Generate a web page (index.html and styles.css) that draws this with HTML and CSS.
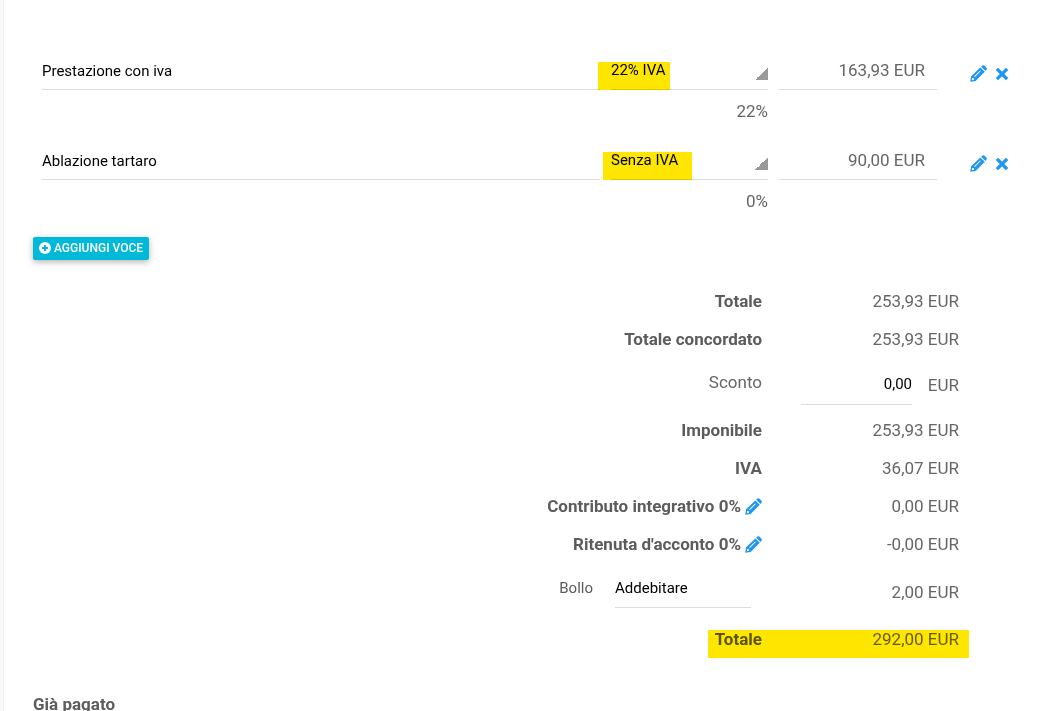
FILE: index.html
```
<!DOCTYPE html>
<html lang="it">
<head>
    <meta charset="UTF-8">
    <meta name="viewport" content="width=device-width, initial-scale=1.0">
    <title>Fattura</title>
    <link rel="stylesheet" href="styles.css">
</head>
<body>
    <svg class="sprite" aria-hidden="true">
        <symbol id="pencil" viewBox="0 0 17 17">
            <path fill-rule="evenodd" d="M0.2 16.8L1.1 11.3L10.3 2.4L14.8 6.8L5.6 15.9ZM2.2 13L1.8 15.2L4 14.8L4 13.2ZM4.2 11.2L4.9 11.9L10.8 6.1L10.1 5.4Z"/>
            <path d="M11.1 1.7L12.5 0.5Q13.4 -0.1 14.3 0.6L16.5 2.8Q17.2 3.6 16.6 4.5L15.5 6Z"/>
        </symbol>
        <symbol id="cross" viewBox="0 0 12 12">
            <path d="M2 2L10 10M10 2L2 10" stroke="currentColor" stroke-width="3.3" stroke-linecap="square"/>
        </symbol>
    </svg>

    <main class="invoice">
        <div class="item">
            <input class="field item-name" type="text" value="Prestazione con iva" aria-label="Descrizione">
            <div class="item-vat">
                <select class="field vat-select" aria-label="Aliquota IVA">
                    <option>22% IVA</option>
                    <option>Senza IVA</option>
                </select>
                <span class="marker marker-vat"></span>
            </div>
            <input class="field item-amount" type="text" value="163,93 EUR" aria-label="Importo">
            <div class="item-actions">
                <button class="icon-btn" type="button" aria-label="Modifica"><svg class="icon-pencil"><use href="#pencil"/></svg></button>
                <button class="icon-btn" type="button" aria-label="Elimina"><svg class="icon-cross"><use href="#cross"/></svg></button>
            </div>
            <span class="item-rate">22%</span>
        </div>

        <div class="item">
            <input class="field item-name" type="text" value="Ablazione tartaro" aria-label="Descrizione">
            <div class="item-vat">
                <select class="field vat-select" aria-label="Aliquota IVA">
                    <option>Senza IVA</option>
                    <option>22% IVA</option>
                </select>
                <span class="marker marker-novat"></span>
            </div>
            <input class="field item-amount" type="text" value="90,00 EUR" aria-label="Importo">
            <div class="item-actions">
                <button class="icon-btn" type="button" aria-label="Modifica"><svg class="icon-pencil"><use href="#pencil"/></svg></button>
                <button class="icon-btn" type="button" aria-label="Elimina"><svg class="icon-cross"><use href="#cross"/></svg></button>
            </div>
            <span class="item-rate">0%</span>
        </div>

        <button class="add-btn" type="button">
            <svg class="icon-plus" viewBox="0 0 12 12" aria-hidden="true">
                <circle cx="6" cy="6" r="6" fill="#fff"/>
                <path d="M6 3V9M3 6H9" stroke="#00b8d8" stroke-width="2"/>
            </svg>
            AGGIUNGI VOCE
        </button>

        <section class="totals">
            <div class="total-row">
                <strong>Totale</strong>
                <span class="value">253,93 EUR</span>
            </div>
            <div class="total-row">
                <strong>Totale concordato</strong>
                <span class="value">253,93 EUR</span>
            </div>
            <div class="total-row discount-row">
                <label class="discount-label" for="sconto">Sconto</label>
                <span class="value discount">
                    <input class="field" id="sconto" type="text" value="0,00">
                    EUR
                </span>
            </div>
            <div class="total-row">
                <strong>Imponibile</strong>
                <span class="value">253,93 EUR</span>
            </div>
            <div class="total-row">
                <strong>IVA</strong>
                <span class="value">36,07 EUR</span>
            </div>
            <div class="total-row">
                <strong class="editable">Contributo integrativo 0%
                    <button class="icon-btn" type="button" aria-label="Modifica contributo"><svg class="icon-pencil"><use href="#pencil"/></svg></button>
                </strong>
                <span class="value">0,00 EUR</span>
            </div>
            <div class="total-row">
                <strong class="editable">Ritenuta d'acconto 0%
                    <button class="icon-btn" type="button" aria-label="Modifica ritenuta"><svg class="icon-pencil"><use href="#pencil"/></svg></button>
                </strong>
                <span class="value">-0,00 EUR</span>
            </div>
            <div class="total-row stamp-row">
                <div class="stamp">
                    <label for="bollo">Bollo</label>
                    <select class="field" id="bollo">
                        <option>Addebitare</option>
                        <option>Non addebitare</option>
                    </select>
                </div>
                <span class="value">2,00 EUR</span>
            </div>
            <div class="total-row">
                <strong>Totale</strong>
                <span class="value">292,00 EUR</span>
                <span class="marker marker-total"></span>
            </div>
        </section>

        <h2 class="paid-title">Già pagato</h2>
    </main>
</body>
</html>
```

FILE: styles.css
```
* {
    box-sizing: border-box;
}
body {
    margin: 0;
    height: 100vh;
    overflow: hidden;
    padding-left: 3px;
    background-color: #fafafa;
    font-family: Roboto, sans-serif;
    font-size: 17px;
    line-height: 22px;
    color: #5c5c5c;
}
.sprite {
    display: none;
}
.invoice {
    min-height: 100vh;
    padding: 53px 29px 0;
    border-left: 1px solid #eee;
    background-color: #fff;
}

/* fields */
.field {
    display: block;
    width: 100%;
    height: 37px;
    padding: 0;
    border: 0;
    border-bottom: 1px solid #ddd;
    border-radius: 0;
    outline: 0;
    background-color: transparent;
    appearance: none;
    font-family: inherit;
    font-size: 15px;
    color: #000;
}

/* invoice items */
.item {
    display: grid;
    grid-template-columns: minmax(0, 1fr) 157px 158px 60px;
    column-gap: 11px;
    padding-left: 9px;
    margin-bottom: 21px;
}
.item-vat {
    position: relative;
}
.vat-select {
    padding-bottom: 2px;
    background: linear-gradient(135deg, transparent 50%, #999 50%) right 14px / 13px 13px no-repeat;
}
.item-amount {
    padding-right: 12px;
    padding-bottom: 2px;
    font-size: 17px;
    text-align: right;
    color: #666;
}
.item-actions {
    display: flex;
    justify-content: space-between;
    align-items: center;
    height: 37px;
    padding: 4px 0 0 22px;
}
.item-rate {
    grid-column: 2;
    margin-top: 10px;
    text-align: right;
    color: #666;
}
.icon-btn {
    display: flex;
    padding: 0;
    border: 0;
    background: none;
    color: #2196f3;
    cursor: pointer;
}
.icon-btn svg {
    fill: currentColor;
}
.icon-pencil {
    width: 17px;
    height: 17px;
}
.icon-cross {
    width: 12px;
    height: 12px;
}

/* highlighter */
.marker {
    position: absolute;
    height: 28px;
    background-color: #ffe600;
    mix-blend-mode: multiply;
    pointer-events: none;
}
.marker-vat {
    top: 9px;
    left: -13px;
    width: 72px;
}
.marker-novat {
    top: 9px;
    left: -8px;
    width: 89px;
}
.marker-total {
    right: -10px;
    bottom: 0;
    width: 261px;
}

.add-btn {
    display: flex;
    align-items: center;
    gap: 3px;
    height: 23px;
    margin-top: 25px;
    padding: 0 6px 2px;
    border: 0;
    border-radius: 2px;
    background-color: #00b8d8;
    box-shadow: 0 2px 6px rgba(0, 0, 0, 0.3);
    font-family: inherit;
    font-size: 12px;
    font-weight: 500;
    color: #fff;
    cursor: pointer;
}
.icon-plus {
    width: 12px;
    height: 12px;
}

/* totals */
.totals {
    margin-top: 22px;
    padding-right: 49px;
}
.total-row {
    position: relative;
    display: grid;
    grid-template-columns: 1fr 158px;
    column-gap: 39px;
    align-items: center;
    height: 38px;
    text-align: right;
}
.total-row strong {
    font-weight: 700;
}
.value,
.discount-label {
    color: #666;
}
.discount-row {
    height: 53px;
}
.discount-label {
    padding-bottom: 6px;
}
.discount {
    display: flex;
    justify-content: space-between;
    align-items: center;
}
.discount .field {
    width: 111px;
    height: 40px;
    text-align: right;
}
.editable {
    display: flex;
    justify-content: flex-end;
    align-items: center;
    gap: 4px;
}
.stamp-row {
    height: 57px;
}
.stamp {
    display: flex;
    justify-content: flex-end;
    align-items: center;
    gap: 22px;
    padding-right: 11px;
    padding-bottom: 7px;
    font-size: 15px;
}
.stamp .field {
    width: 136px;
    height: 40px;
}

.paid-title {
    margin: 35px 0 0;
    font-size: 17px;
    font-weight: 700;
}
```
